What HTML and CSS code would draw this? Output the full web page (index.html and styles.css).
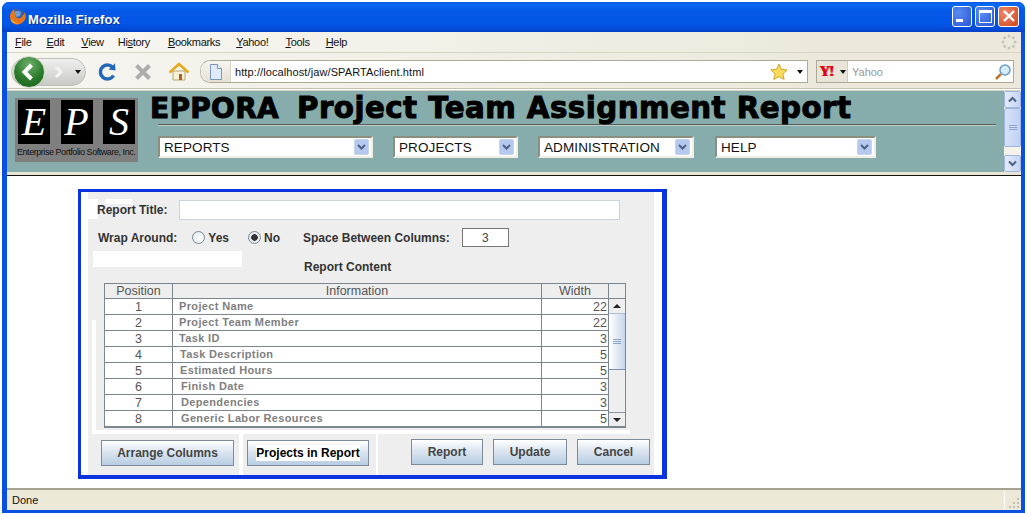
FILE: index.html
```html
<!DOCTYPE html>
<html lang="en">
<head>
  <meta charset="UTF-8">
  <title>Mozilla Firefox</title>
  <link rel="stylesheet" href="styles.css">
</head>
<body>
<div class="window">
  <div class="titlebar">
    <svg class="fox" width="17" height="17" viewBox="0 0 17 17">
      <circle cx="8.5" cy="8.5" r="7.5" fill="#3a5fa8"/>
      <path d="M5 4c2-1.500 5-1.500 7 0l-1 4-4 1z" fill="#6f9fd8"/>
      <path d="M1 9C1 5 3 2 6 1 4.500 3 5 5 7 6 5.500 7 6 9 8 10c2.500 1 5 0 6-3 1 0 1.500-1 1-3 1.500 2 2 4 1.500 6-1 4-4.500 6.500-8.500 6.500S1 13 1 9z" fill="#e8771c"/>
      <path d="M3 11c1 3 4 4.500 7 4-3 1.500-7 0-8-3z" fill="#f7b733"/>
    </svg>
    <span class="title-text">Mozilla Firefox</span>
    <div class="caption-btns">
      <div class="cap-btn"><span class="min-glyph"></span></div>
      <div class="cap-btn"><span class="max-glyph"></span></div>
      <div class="cap-btn close">
        <svg width="14" height="14" viewBox="0 0 14 14"><path d="M2 2l10 10M12 2L2 12" stroke="#fff" stroke-width="2.400"/></svg>
      </div>
    </div>
  </div>

  <div class="menubar">
    <span class="menu-item m-file"><u>F</u>ile</span>
    <span class="menu-item m-edit"><u>E</u>dit</span>
    <span class="menu-item m-view"><u>V</u>iew</span>
    <span class="menu-item m-hist">Hi<u>s</u>tory</span>
    <span class="menu-item m-book"><u>B</u>ookmarks</span>
    <span class="menu-item m-yahoo"><u>Y</u>ahoo!</span>
    <span class="menu-item m-tools"><u>T</u>ools</span>
    <span class="menu-item"><u>H</u>elp</span>
    <svg class="throbber" width="16" height="16" viewBox="0 0 16 16" fill="#c6c4bb">
      <circle cx="8" cy="2" r="1.500"/><circle cx="12.300" cy="3.700" r="1.500"/><circle cx="14" cy="8" r="1.500"/><circle cx="12.300" cy="12.300" r="1.500"/><circle cx="8" cy="14" r="1.500"/><circle cx="3.700" cy="12.300" r="1.500"/><circle cx="2" cy="8" r="1.500"/><circle cx="3.700" cy="3.700" r="1.500"/>
    </svg>
  </div>

  <div class="navbar">
    <div class="backfwd">
      <div class="back-btn">
        <svg width="32" height="32" viewBox="0 0 32 32"><path d="M18.500 9l-7 7 7 7" fill="none" stroke="#fff" stroke-width="4"/></svg>
      </div>
      <svg class="fwd" width="12" height="14" viewBox="0 0 12 14"><path d="M3 2l5 5-5 5" fill="none" stroke="#f4f4f4" stroke-width="3"/></svg>
      <span class="drop-arrow back-drop"></span>
    </div>
    <svg class="nav-icon reload" width="20" height="20" viewBox="0 0 20 20"><path d="M16.500 6.500A7 7 0 1 0 16.500 13.500" fill="none" stroke="#2468b8" stroke-width="3.400"/><path d="M11.500 7.500L18.500 8.500 18 1.500z" fill="#2468b8"/></svg>
    <svg class="nav-icon stop" width="18" height="18" viewBox="0 0 18 18"><path d="M2.500 2.500l13 13M15.500 2.500l-13 13" stroke="#adadad" stroke-width="4"/></svg>
    <svg class="nav-icon home" width="20" height="20" viewBox="0 0 20 20"><path d="M4 9v9h12V9z" fill="#f8f1d8" stroke="#b5a77a"/><path d="M0.500 10.500L10 2l9.500 8.500" fill="none" stroke="#e9a91e" stroke-width="2.600"/><path d="M10 12h3v6h-3z" fill="#a3642a"/></svg>
    <div class="urlbar">
      <div class="url-icon">
        <svg width="14" height="16" viewBox="0 0 14 16"><path d="M1.500 .5h7l4 4v11h-11z" fill="#dfeafa" stroke="#7d94b8"/><path d="M8.500 .5v4h4" fill="#fff" stroke="#7d94b8"/></svg>
      </div>
      <span class="url-text">http://localhost/jaw/SPARTAclient.html</span>
      <svg class="star" width="18" height="18" viewBox="0 0 18 18"><path d="M9 1l2.400 5.300 5.800.6-4.300 3.900 1.200 5.700L9 13.600l-5.100 2.900 1.200-5.700L.8 6.900l5.800-.6z" fill="#fbdc5a" stroke="#d3a52b"/></svg>
      <span class="drop-arrow url-drop"></span>
    </div>
    <div class="searchbar">
      <div class="engine"><span class="yahoo-mark">Y!</span><span class="drop-arrow"></span></div>
      <span class="search-text">Yahoo</span>
      <svg class="magnifier" width="18" height="18" viewBox="0 0 18 18"><circle cx="11" cy="7" r="5" fill="#d6ebfa" stroke="#6d9cc4" stroke-width="1.500"/><path d="M7 11l-5 5" stroke="#b5762f" stroke-width="2.500"/></svg>
    </div>
  </div>

  <div class="viewport">
    <div class="app-frame">
      <div class="app-header">
        <div class="logo">
          <div class="logo-letters">
            <span class="logo-box">E</span>
            <span class="logo-box">P</span>
            <span class="logo-box">S</span>
          </div>
          <div class="logo-sub">Enterprise Portfolio Software, Inc.</div>
        </div>
        <div class="app-head-right">
          <h1 class="app-title"><span class="t-small">EPPORA</span><span class="t-big">Project Team Assignment Report</span></h1>
          <div class="title-rule"></div>
          <div class="select-row">
            <div class="sel sel-reports"><span>REPORTS</span><span class="sel-btn"><svg width="9" height="7" viewBox="0 0 9 7"><path d="M1 1l3.500 3.500L8 1" fill="none" stroke="#4d6185" stroke-width="2"/></svg></span></div>
            <div class="sel sel-projects"><span>PROJECTS</span><span class="sel-btn"><svg width="9" height="7" viewBox="0 0 9 7"><path d="M1 1l3.500 3.500L8 1" fill="none" stroke="#4d6185" stroke-width="2"/></svg></span></div>
            <div class="sel sel-admin"><span>ADMINISTRATION</span><span class="sel-btn"><svg width="9" height="7" viewBox="0 0 9 7"><path d="M1 1l3.500 3.500L8 1" fill="none" stroke="#4d6185" stroke-width="2"/></svg></span></div>
            <div class="sel sel-help"><span>HELP</span><span class="sel-btn"><svg width="9" height="7" viewBox="0 0 9 7"><path d="M1 1l3.500 3.500L8 1" fill="none" stroke="#4d6185" stroke-width="2"/></svg></span></div>
          </div>
        </div>
        <div class="v-scroll">
          <span class="sb-arrow"><svg width="9" height="7" viewBox="0 0 9 7"><path d="M1 5.500L4.500 2 8 5.500" fill="none" stroke="#4d6185" stroke-width="2"/></svg></span>
          <span class="sb-thumb"><i class="grip-lines"></i></span>
          <span class="sb-track"></span>
          <span class="sb-arrow"><svg width="9" height="7" viewBox="0 0 9 7"><path d="M1 1.500L4.500 5 8 1.500" fill="none" stroke="#4d6185" stroke-width="2"/></svg></span>
        </div>
      </div>
    </div>

    <div class="page">
      <div class="report-box">
        <div class="report-inner">
          <span class="patch patch-a"></span>
          <span class="patch patch-b"></span>
          <span class="patch patch-c"></span>
          <span class="patch patch-d"></span>
          <span class="patch patch-e"></span>
          <span class="patch patch-f"></span>
          <span class="patch patch-g"></span>

          <div class="title-row">
            <label class="lbl">Report Title:</label>
            <div class="text-field"></div>
          </div>
          <div class="wrap-row">
            <span class="lbl">Wrap Around:</span>
            <span class="radio"></span><span class="lbl radio-text">Yes</span>
            <span class="radio checked"></span><span class="lbl radio-text">No</span>
            <span class="lbl space-lbl">Space Between Columns:</span>
            <div class="num-field">3</div>
          </div>
          <div class="content-lbl lbl">Report Content</div>

          <table class="grid">
            <colgroup>
              <col class="c-pos"><col class="c-info"><col class="c-width"><col class="c-sb">
            </colgroup>
            <thead>
              <tr><th>Position</th><th>Information</th><th>Width</th><th class="corner"></th></tr>
            </thead>
            <tbody>
              <tr><td class="pos">1</td><td class="info">Project Name</td><td class="wid">22</td>
                <td class="sb-cell" rowspan="8">
                  <div class="grid-scroll">
                    <span class="gs-arrow"><i class="tri-up"></i></span>
                    <span class="gs-thumb"><i class="grip-lines"></i></span>
                    <span class="gs-track"></span>
                    <span class="gs-arrow gs-down"><i class="tri-down"></i></span>
                  </div>
                </td></tr>
              <tr><td class="pos">2</td><td class="info">Project Team Member</td><td class="wid">22</td></tr>
              <tr><td class="pos">3</td><td class="info">Task ID</td><td class="wid">3</td></tr>
              <tr><td class="pos">4</td><td class="info ind1">Task Description</td><td class="wid">5</td></tr>
              <tr><td class="pos">5</td><td class="info ind1">Estimated Hours</td><td class="wid">5</td></tr>
              <tr><td class="pos">6</td><td class="info ind2">Finish Date</td><td class="wid">3</td></tr>
              <tr><td class="pos">7</td><td class="info ind2">Dependencies</td><td class="wid">3</td></tr>
              <tr><td class="pos">8</td><td class="info ind2">Generic Labor Resources</td><td class="wid">5</td></tr>
            </tbody>
          </table>

          <div class="btn-row">
            <button class="btn b-arrange">Arrange Columns</button>
            <button class="btn b-projects"><span>Projects in Report</span></button>
            <button class="btn b-report">Report</button>
            <button class="btn b-update">Update</button>
            <button class="btn b-cancel">Cancel</button>
          </div>
        </div>
      </div>
    </div>
  </div>

  <div class="statusbar">
    <span>Done</span>
    <span class="status-sep"></span>
    <svg class="grip" width="12" height="12" viewBox="0 0 12 12" fill="#c3c0b0">
      <rect x="9" y="1" width="2" height="2"/><rect x="5" y="5" width="2" height="2"/><rect x="9" y="5" width="2" height="2"/><rect x="1" y="9" width="2" height="2"/><rect x="5" y="9" width="2" height="2"/><rect x="9" y="9" width="2" height="2"/>
    </svg>
  </div>
</div>
</body>
</html>
```

FILE: styles.css
```css
* { box-sizing: border-box; }
html, body { margin: 0; padding: 0; background: #fff; overflow: hidden; }
body { width: 1027px; height: 514px; font-family: "Liberation Sans", Arial, sans-serif; }

.window {
  width: 1023px; height: 511px; margin: 2px 0 0 2px;
  display: flex; flex-direction: column;
  background: #0a50e0;
  border-radius: 7px 7px 0 0;
  padding: 0 4px 3px 5px;
}

/* title bar */
.titlebar {
  height: 30px; margin: 0 -4px 0 -5px; padding: 0 5px 0 7px;
  display: flex; align-items: center; flex: none;
  border-radius: 7px 7px 0 0;
  background: linear-gradient(#0a5be6 0, #0a6af2 3px, #0458e8 8px, #0355e6 22px, #0348d2 28px, #0340c4 30px);
}
.fox { margin-right: 2px; margin-top: -2px; }
.title-text { color: #fff; font: bold 13px "Liberation Sans", sans-serif; letter-spacing: .1px; text-shadow: 1px 1px 0 #0a2f9a; margin-top: 4px; }
.caption-btns { margin-left: auto; display: flex; gap: 3px; margin-top: -2px; padding-right: 1px; }
.cap-btn {
  width: 20px; height: 21px; border: 1px solid #fff; border-radius: 3px;
  background: radial-gradient(circle at 30% 30%, #5a8cf0, #2a55d6);
  display: flex; align-items: center; justify-content: center; position: relative;
}
.cap-btn.close { width: 21px; background: radial-gradient(circle at 30% 30%, #ec8a6c, #d0431c); }
.min-glyph { width: 7px; height: 3px; background: #fff; margin: 9px 5px 0 0; }
.max-glyph { width: 13px; height: 13px; border: 1px solid #fff; border-top-width: 3px; }

/* menu */
.menubar {
  height: 21px; flex: none; display: flex; align-items: center;
  background: linear-gradient(90deg, #f8f7f3, #ece9dc 80%);
  border-bottom: 1px solid #d8d4c2;
  padding-left: 8px; font-size: 11px; letter-spacing: -.3px; color: #111; position: relative;
}
.menu-item { flex: none; }
.m-file { margin-right: 15px; }
.m-edit { margin-right: 17px; }
.m-view { margin-right: 14px; }
.m-hist { margin-right: 18px; }
.m-book { margin-right: 16px; }
.m-yahoo { margin-right: 17px; }
.m-tools { margin-right: 16px; }
.throbber { margin-left: auto; margin-right: 4px; }

/* nav toolbar */
.navbar {
  height: 36px; flex: none; display: flex; align-items: center; padding: 2px 0 0 4px;
  background: linear-gradient(90deg, #f6f5f0, #ece9dc 80%);
  border-bottom: 1px solid #c4c1b2;
}
.backfwd {
  width: 75px; height: 28px; border-radius: 14px; display: flex; align-items: center; flex: none;
  background: linear-gradient(#f0f0ee, #c9c9c5); border: 1px solid #c0c0ba; position: relative;
}
.back-btn {
  width: 32px; height: 32px; border-radius: 50%; margin-left: 1px; flex: none;
  background: radial-gradient(circle at 50% 25%, #6fb06a, #2b7a2b 55%, #14601a);
  border: 1px solid #c8d8c4;
}
.back-btn svg { display: block; margin: -1px; }
.fwd { margin-left: 8px; }
.drop-arrow { width: 0; height: 0; border: 3px solid transparent; border-top: 4px solid #111; border-bottom: 0; display: inline-block; }
.back-drop { margin-left: 10px; }
.nav-icon { flex: none; }
.reload { margin-left: 11px; }
.stop { margin-left: 17px; }
.home { margin-left: 17px; }
.urlbar {
  width: 608px; height: 23px; margin-left: 11px; display: flex; align-items: center;
  background: #fff; border: 1px solid #aeaa98; border-left-color: #c2bfaf;
  border-radius: 10px 0 0 10px; position: relative; flex: none;
}
.url-icon {
  width: 30px; height: 21px; background: linear-gradient(#f6f5ef, #e4e1d4); border-right: 1px solid #d8d5c8;
  border-radius: 10px 0 0 10px; display: flex; align-items: center; justify-content: center; flex: none;
}
.url-text { font-size: 11px; color: #111; margin-left: 4px; letter-spacing: .1px; }
.star { margin-left: auto; margin-right: 9px; }
.url-drop { margin-right: 4px; }
.searchbar {
  width: 198px; height: 23px; margin-left: 8px; display: flex; align-items: center; flex: none;
  background: #fff; border: 1px solid #aeaa98;
}
.engine {
  width: 31px; height: 21px; background: #e8e5d8; border-right: 1px solid #cfccbe;
  display: flex; align-items: center; gap: 2px; padding-left: 2px; flex: none;
}
.yahoo-mark { color: #e3000f; font: bold 15px "Liberation Serif", serif; letter-spacing: -1px; text-shadow: 1px 0 0 #e3000f; width: 19px; }
.search-text { color: #999; font-size: 11px; margin-left: 4px; }
.magnifier { margin-left: auto; margin-right: 1px; }

/* content */
.viewport { flex: 1; min-height: 0; background: #fff; display: flex; flex-direction: column; border-top: 1px solid #fff; }
.app-frame { flex: none; }
.app-header {
  height: 85px; display: flex; background: #86acab;
  border-top: 1px solid #d6d3c4; border-bottom: 3px solid #e9e6d6; position: relative;
  box-shadow: 0 1px 0 #111;
}
.logo { width: 123px; height: 64px; margin: 7px 0 0 8px; background: #7f7f7f; flex: none; padding: 2px 3px 0; }
.logo-letters { display: flex; justify-content: space-between; }
.logo-box {
  width: 32px; height: 44px; background: #000; color: #fff; text-align: center;
  font: italic 40px/44px "Liberation Serif", serif;
}
.logo-sub { font-size: 9px; color: #111; white-space: nowrap; margin-top: 3px; margin-left: -1px; letter-spacing: -.45px; }

.app-head-right { flex: 1; min-width: 0; margin-left: 12px; }
.app-title {
  margin: 2px 0 0; height: 31px; color: #000; font: bold 29.300px/31px "DejaVu Sans", sans-serif; white-space: nowrap;
  -webkit-text-stroke: 1px #000;
}
.t-small { font-size: 28px; letter-spacing: .3px; margin-right: 18px; }
.t-big { letter-spacing: .45px; }
.title-rule { height: 2px; margin: 0 8px 0 8px; background: linear-gradient(#5c5c58 1px, #b9cdcb 1px); }
.select-row { display: flex; margin: 10px 0 0 8px; }
.sel {
  height: 22px; background: #fff; display: flex; align-items: center; justify-content: space-between;
  border: 2px solid; border-color: #8a8f80 #f0efe6 #f0efe6 #8a8f80; padding: 0 2px 0 4px;
  font-size: 13.500px; color: #111; letter-spacing: .1px;
}
.sel-reports { width: 215px; margin-right: 20px; }
.sel-projects { width: 125px; margin-right: 20px; }
.sel-admin { width: 156px; margin-right: 21px; }
.sel-help { width: 161px; }
.sel-btn {
  width: 15px; height: 16px; border-radius: 2px; background: #b5c9ee; border: 1px solid #c4d3f0;
  display: flex; align-items: center; justify-content: center;
}
.v-scroll {
  width: 17px; margin-right: 0; flex: none; display: flex; flex-direction: column; background: #f4f3ec;
}
.sb-arrow {
  height: 17px; background: linear-gradient(90deg, #e3ebfb, #c6d5f4); border: 1px solid #9fb4de; border-radius: 2px;
  display: flex; align-items: center; justify-content: center; flex: none;
}
.sb-thumb {
  height: 39px; background: linear-gradient(90deg, #d6e2fa, #c0d1f3);
  border: 1px solid #9fb4de; border-radius: 2px; flex: none;
  display: flex; align-items: center; justify-content: center;
}
.sb-track { flex: 1; }
.grip-lines { width: 8px; height: 5px; background: repeating-linear-gradient(#8ea5cc 0, #8ea5cc 1px, transparent 1px, transparent 2px); }

.page { flex: 1; min-height: 0; padding: 13px 0 0 71px; border-top: 1px solid #111; }
.report-box {
  width: 589px; height: 290px; background: #fff;
  border: solid #0a33e0; border-width: 3px 5px 4px 3px;
  padding: 0 8px 0 7px;
}
.report-inner { height: 100%; background: #eeeeee; position: relative; color: #333; }
.patch { position: absolute; background: #fff; }
.patch-a { left: 0; top: 7px; width: 10px; height: 20px; }
.patch-b { left: 17px; top: 7px; width: 27px; height: 5px; }
.patch-c { left: 5px; top: 59px; width: 149px; height: 16px; }
.patch-d { left: 4px; top: 128px; width: 4px; height: 110px; }
.patch-e { left: 4px; top: 238px; width: 538px; height: 4px; }
.patch-f { left: 151px; top: 242px; width: 4px; height: 41px; }
.patch-g { left: 288px; top: 242px; width: 2px; height: 41px; }

.lbl { font: bold 12px "Liberation Sans", sans-serif; color: #333; position: relative; }
.title-row { display: flex; align-items: center; padding: 8px 0 0 9px; }
.text-field { width: 441px; height: 20px; margin-left: 12px; background: #fff; border: 1px solid #ccd3dc; position: relative; }
.wrap-row { display: flex; align-items: center; height: 23px; margin-top: 6px; padding-left: 10px; }
.radio {
  width: 13px; height: 13px; border-radius: 50%; border: 1px solid #7a8794; margin-left: 15px;
  background: radial-gradient(circle at 60% 60%, #fff, #dfe4ea);
  flex: none;
}
.radio.checked { background: radial-gradient(circle, #333 0, #333 3px, #dfe4ea 3.500px, #fff); }
.radio-text { margin-left: 3px; }
.radio-text + .radio { margin-left: 19px; }
.space-lbl { margin-left: 23px; }
.num-field {
  width: 47px; height: 19px; margin-left: 12px; background: #fff; border: 1px solid #777;
  text-align: center; font-size: 12px; line-height: 19px; color: #444;
}
.content-lbl { margin: 11px 0 0 216px; height: 15px; line-height: 15px; }

.grid {
  width: 521px; margin: 8px 0 0 16px; border-collapse: collapse; table-layout: fixed;
  background: #fff; border: 1px solid #7c868e; border-bottom-width: 2px;
  position: relative;
}
.c-pos { width: 68px; } .c-info { width: 369px; } .c-width { width: 67px; } .c-sb { width: 17px; }
.grid th {
  height: 15px; padding: 0; background: #eeeeee; font: normal 12.500px "Liberation Sans", sans-serif; color: #555;
  border: 1px solid #7c868e; text-align: center;
}
.grid td { height: 16px; padding: 0; border: 1px solid #7c868e; overflow: hidden; white-space: nowrap; }
.pos { text-align: center; font-size: 12.500px; color: #555; }
.info { font-size: 11px; font-weight: bold; color: #7f7f7f; padding: 0 0 2px 6px !important; letter-spacing: .35px; }
.ind1 { padding-left: 7px !important; }
.ind2 { padding-left: 8px !important; }
.wid { text-align: right; font-size: 12.500px; color: #555; padding-right: 1px !important; }
.grid .sb-cell { padding: 0; vertical-align: top; background: #eeeeee; }
.grid-scroll { display: flex; flex-direction: column; height: 127px; }
.gs-arrow { height: 14px; flex: none; display: flex; align-items: center; justify-content: center; background: #eee; }
.gs-down { border-top: 1px solid #8b96a2; }
.tri-up, .tri-down { width: 0; height: 0; border: 4px solid transparent; }
.tri-up { border-bottom: 4px solid #222; border-top: 0; }
.tri-down { border-top: 4px solid #222; border-bottom: 0; }
.gs-thumb {
  height: 57px; flex: none; background: linear-gradient(90deg, #fff, #c6d6ea); border-bottom: 1px solid #7b94b4; border-top: 1px solid #b0bfd0;
  display: flex; align-items: center; justify-content: center;
}
.gs-track { flex: 1; }

.btn-row { display: flex; padding-left: 13px; margin-top: 11px; align-items: flex-start; position: relative; }
.btn {
  height: 26px; padding: 0; font: bold 12px "Liberation Sans", sans-serif; color: #444;
  border: 1px solid #7c8a9a; background: linear-gradient(#fff, #dfe8f2 40%, #b8cde2);
}
.b-arrange { width: 133px; margin-top: 1px; }
.b-projects { width: 122px; margin: 1px 0 0 13px; color: #000; }
.b-projects span { background: #fff; padding: 1px 0; }
.b-report { width: 72px; margin-left: 42px; }
.b-update { width: 74px; margin-left: 10px; }
.b-cancel { width: 73px; margin-left: 10px; }

/* status */
.statusbar {
  height: 22px; flex: none; display: flex; align-items: center; padding-left: 5px; font-size: 11px; color: #111;
  background: #ece9d8; border-top: 2px solid #a5a294; position: relative;
}
.status-sep { width: 1px; height: 18px; background: #fff; margin-left: auto; margin-right: 3px; }
.grip { margin-right: 1px; margin-top: 6px; }
```
